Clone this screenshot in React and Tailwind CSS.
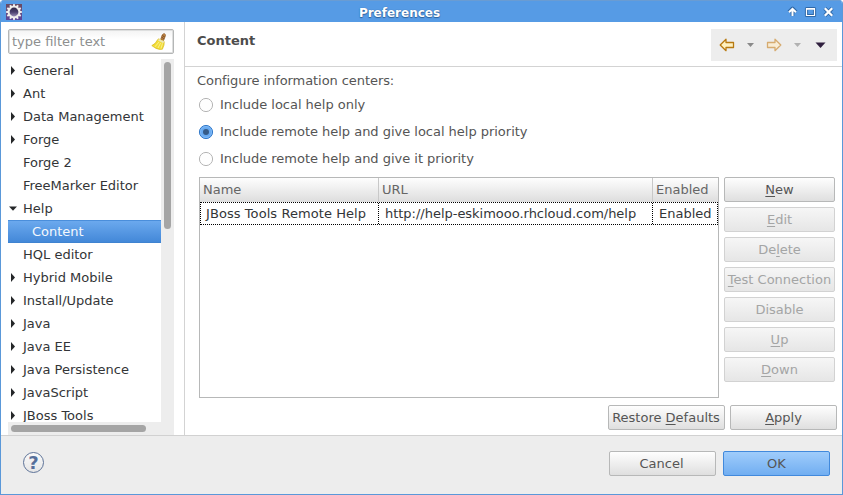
import React from "react";

const tree = [
  ["General", "closed"],
  ["Ant", "closed"],
  ["Data Management", "closed"],
  ["Forge", "closed"],
  ["Forge 2", ""],
  ["FreeMarker Editor", ""],
  ["Help", "open"],
  ["Content", "selected"],
  ["HQL editor", ""],
  ["Hybrid Mobile", "closed"],
  ["Install/Update", "closed"],
  ["Java", "closed"],
  ["Java EE", "closed"],
  ["Java Persistence", "closed"],
  ["JavaScript", "closed"],
  ["JBoss Tools", "closed"],
];

function TreeRow({ label, state }) {
  if (state === "selected") {
    return (
      <div className="h-[23px] shrink-0 border-y border-t-[#4a8edb] border-b-[#3f83d0] bg-linear-to-b from-[#6ba9ee] to-[#4388d8] pl-6 leading-[21px] text-[#f4f8fd]">
        {label}
      </div>
    );
  }
  return (
    <div className="flex h-[23px] shrink-0 items-center leading-[23px] text-[#333537]">
      <span className="flex w-[15px] shrink-0">
        {state === "closed" && (
          <svg width="10" height="9" className="ml-0.5">
            <path d="M1 0v9L5 4.5z" fill="#252729" />
          </svg>
        )}
        {state === "open" && (
          <svg width="10" height="9">
            <path d="M1 2.5h8L5 6.7z" fill="#252729" />
          </svg>
        )}
      </span>
      <span className="whitespace-nowrap">{label}</span>
    </div>
  );
}

function Button({ text, mnemonic = -1, disabled, primary, width }) {
  const tone = primary
    ? "border-[#4189dc] bg-linear-to-b from-[#9fccfb] to-[#71aef1] text-[#555555]"
    : disabled
      ? "border-[#d2d2d2] bg-linear-to-b from-[#f6f6f6] to-[#e6e6e6] text-[#a4a5a5]"
      : "border-[#b7b8b8] bg-linear-to-b from-[#fefefe] to-[#dfdfdf] text-[#555555]";
  return (
    <button
      className={`flex h-[25px] shrink-0 items-center justify-center rounded-[2px] border leading-[23px] whitespace-pre ${width} ${tone}`}
    >
      <span>
        {mnemonic < 0 ? (
          text
        ) : (
          <>
            {text.slice(0, mnemonic)}
            <span className="underline decoration-1 underline-offset-2 [text-decoration-skip-ink:none]">{text[mnemonic]}</span>
            {text.slice(mnemonic + 1)}
          </>
        )}
      </span>
    </button>
  );
}

function Radio({ label, checked }) {
  return (
    <label className="flex h-[27px] items-center tracking-[-0.02px] text-[#555555]">
      <svg width="16" height="16" className="mr-1.5 shrink-0">
        {checked ? (
          <>
            <circle cx="8" cy="8" r="6.6" fill="#67a9f0" stroke="#347ac9" />
            <circle cx="8" cy="8" r="5.5" fill="none" stroke="#87bdf6" strokeWidth="0.8" />
            <circle cx="8" cy="8" r="3" fill="#355b87" />
          </>
        ) : (
          <circle cx="8" cy="8" r="6.6" fill="#fefefe" stroke="#b5b5b5" />
        )}
      </svg>
      {label}
    </label>
  );
}

function EclipseIcon() {
  const teeth = Array.from({ length: 12 }, (_, i) => i * 30);
  return (
    <svg width="16" height="16" viewBox="0 0 16 16">
      <defs>
        <linearGradient id="tile" x1="0" y1="0" x2="0" y2="1">
          <stop offset="0" stopColor="#6a4c62" />
          <stop offset="1" stopColor="#5a459c" />
        </linearGradient>
        <linearGradient id="orb" x1="0" y1="0" x2="0" y2="1">
          <stop offset="0" stopColor="#2c2444" />
          <stop offset="0.5" stopColor="#4a3f6c" />
          <stop offset="1" stopColor="#a79cc4" />
        </linearGradient>
      </defs>
      <rect width="16" height="16" fill="url(#tile)" />
      {teeth.map((a) => (
        <rect key={a} x="7" y="0.2" width="2" height="2.6" fill="#f3f1ef" transform={`rotate(${a} 8 8)`} />
      ))}
      <circle cx="8" cy="8" r="5.4" fill="url(#orb)" stroke="#efedeb" strokeWidth="2" />
    </svg>
  );
}

function Broom() {
  return (
    <svg width="16" height="17" viewBox="0 0 16 17">
      <path d="M9.8 6.2 11.2 2.2Q12 .4 13.4.7 14.8 1.2 14.3 3L12.6 7.4z" fill="#c98a45" stroke="#8e5a27" strokeWidth="0.8" />
      <path d="M11.4 2.6l2.2 1.2M10.8 4.4l2 1.1" stroke="#63401f" strokeWidth="0.9" />
      <path d="M7.5 5.8 13.2 8.6 13 12 11.4 16.2 8.6 16.4 5 15.4.8 12.6Q4.6 11 6.2 7.3z" fill="#f2dd37" stroke="#d5b91c" strokeWidth="0.7" />
      <path d="M7.5 6.8l5.2 2.6" stroke="#ece6b8" strokeWidth="1.8" />
      <path d="M8 9 4 13.8M9.6 10 7 15M11.5 10.4 10 15.5" stroke="#fbf195" strokeWidth="0.9" />
    </svg>
  );
}

function ArrowIcon({ faded, flip }) {
  return (
    <svg width="16" height="14" viewBox="0 0 16 14" className={flip ? "-scale-x-100" : ""}>
      <path
        d="M1.2 7 7 1.3V4.5H14.5V9.5H7V12.7z"
        fill={faded ? "#f8ecd5" : "#fff1c0"}
        stroke={faded ? "#d6ab70" : "#b87a12"}
        strokeWidth="1.3"
        strokeLinejoin="round"
      />
    </svg>
  );
}

function WindowControls() {
  return (
    <svg width="48" height="14" viewBox="0 0 48 14" fill="none">
      <g stroke="#2f68a8" strokeLinejoin="round">
        <path d="M5.5 11V4M1.8 7 5.5 3.4 9.2 7" strokeWidth="3.6" />
        <rect x="19.5" y="3.5" width="8" height="7" strokeWidth="3.2" />
        <path d="M37.8 3.3 45.2 10.7M45.2 3.3 37.8 10.7" strokeWidth="4" />
      </g>
      <path d="M5.5 11V4M2 7.3 5.5 3.8 9 7.3" stroke="#fff" strokeWidth="2" />
      <path d="M19.5 3.5h8v7h-8zM19.5 4.2h8" stroke="#fff" strokeWidth="1.2" />
      <path d="M37.8 3.3 45.2 10.7M45.2 3.3 37.8 10.7" stroke="#fff" strokeWidth="2.3" />
    </svg>
  );
}

export default function App() {
  return (
    <div className="flex h-[495px] w-[843px] flex-col overflow-hidden rounded-t-[4px] border border-t-0 border-[#5a98d9] bg-white font-['DejaVu_Sans',sans-serif] text-[13px] text-[#555555]">
      <header className="flex h-[22px] shrink-0 items-center border-t border-[#6a9cd2] bg-[#569be5] pl-[5px] pr-[7px]">
        <EclipseIcon />
        <h1 className="flex-1 pl-[3px] pt-[3px] text-center text-[12px] font-bold leading-4 text-white [text-shadow:0_1px_1px_#2d5f99,0_0_1px_#2d5f99]">
          <span className="mr-[13px]">Preferences</span>
        </h1>
        <WindowControls />
      </header>

      <main className="flex h-[413px] shrink-0">
        <aside className="flex w-[184px] shrink-0 flex-col border-r border-[#d3d3d3] pl-[7px] pt-[7px]">
          <div className="flex h-[25px] w-[166px] shrink-0 items-center justify-between rounded-[2px] border border-[#b4b6b6] bg-linear-to-b from-[#f3f3f3] to-white to-40% pl-[3px] pr-[6px] text-[#8d8f8f] shadow-[inset_0_0_0_1px_#dedfdf]">
            <span>type filter text</span>
            <Broom />
          </div>
          <div className="mt-[5px] flex h-[363px] w-[166px] shrink-0">
            <div className="flex w-[153px] flex-col overflow-hidden">
              {tree.map(([label, state]) => (
                <TreeRow key={label} label={label} state={state} />
              ))}
            </div>
            <div className="w-[13px] bg-[#ededed] pl-[3px] pt-[3px]">
              <div className="h-[167px] w-[7px] rounded-full bg-[#a5a5a5]" />
            </div>
          </div>
          <div className="h-[13px] w-[166px] shrink-0 bg-[#ededed] pl-[3px] pt-[3px]">
            <div className="h-[7px] w-[135px] rounded-full bg-[#a5a5a5]" />
          </div>
        </aside>

        <section className="flex flex-1 flex-col">
          <div className="flex h-[45px] shrink-0 justify-between border-b border-[#d3d3d3] pl-3 pr-[5px] pt-[7px]">
            <h2 className="pt-1 font-bold leading-4 text-[#4c4c4c]">Content</h2>
            <div className="flex h-8 w-[126px] items-center bg-[#ededed] pl-2">
              <ArrowIcon />
              <svg width="7" height="4" className="ml-3"><path d="M0 0h7L3.5 4z" fill="#8a8a8a" /></svg>
              <span className="ml-3 flex"><ArrowIcon faded flip /></span>
              <svg width="7" height="4" className="ml-3"><path d="M0 0h7L3.5 4z" fill="#b1b1b1" /></svg>
              <svg width="11" height="6" className="ml-[14px]"><path d="M.5 .5h10L5.5 6z" fill="#30203f" /></svg>
            </div>
          </div>

          <div className="shrink-0 pl-3 pt-[5px]">
            <p className="h-[19px] leading-[18px] tracking-[-0.07px]">Configure information centers:</p>
            <div className="pl-px">
              <Radio label="Include local help only" />
              <Radio label="Include remote help and give local help priority" checked />
              <Radio label="Include remote help and give it priority" />
            </div>
          </div>

          <div className="mt-[5px] flex shrink-0 gap-[5px] pl-[14px]">
            <div className="h-[221px] w-[520px] border border-[#b7b8b8]">
              <div className="flex h-6 bg-linear-to-b from-[#fefefe] to-[#dddddd] leading-6 text-[#666666]">
                <div className="w-[179px] border-r border-[#c8c8c8] pl-[3px]">Name</div>
                <div className="w-[274px] border-r border-[#c8c8c8] pl-[3px]">URL</div>
                <div className="pl-[3px]">Enabled</div>
              </div>
              <div className="flex h-[23px] border border-dotted border-black leading-[21px] text-[#333537]">
                <div className="w-[178px] border-r border-dotted border-black pl-[5px] tracking-[0.07px]">JBoss Tools Remote Help</div>
                <div className="w-[274px] border-r border-dotted border-black pl-[6px] tracking-[-0.02px]">http://help-eskimooo.rhcloud.com/help</div>
                <div className="pl-[6px]">Enabled</div>
              </div>
            </div>
            <div className="flex flex-col gap-[5px]">
              <Button text="New" mnemonic={0} width="w-[111px]" />
              <Button text="Edit" mnemonic={0} disabled width="w-[111px]" />
              <Button text="Delete" mnemonic={2} disabled width="w-[111px]" />
              <Button text="Test Connection" mnemonic={0} disabled width="w-[111px]" />
              <Button text="Disable" disabled width="w-[111px]" />
              <Button text="Up" mnemonic={0} disabled width="w-[111px]" />
              <Button text="Down" mnemonic={0} disabled width="w-[111px]" />
            </div>
          </div>

          <div className="mt-[7px] flex justify-end gap-[5px] pr-[5px]">
            <Button text="Restore Defaults" mnemonic={8} width="w-[117px] pr-px" />
            <Button text="Apply" mnemonic={0} width="w-[107px]" />
          </div>
        </section>
      </main>

      <footer className="flex flex-1 items-start justify-between border-t border-[#d1d1d1] bg-[#ededed] pl-[22px] pr-3 pt-[15px]">
        <span className="mt-px flex h-[21px] w-[21px] items-center justify-center rounded-full border border-[#5d7398] bg-linear-to-b from-[#fafafa] to-[#e6e6e6] text-[18px] font-bold leading-[19px] text-[#566f9b]">
          ?
        </span>
        <div className="flex gap-[7px]">
          <Button text="Cancel" width="w-[107px] pr-[2px]" />
          <Button text="OK" primary width="w-[107px]" />
        </div>
      </footer>
    </div>
  );
}
